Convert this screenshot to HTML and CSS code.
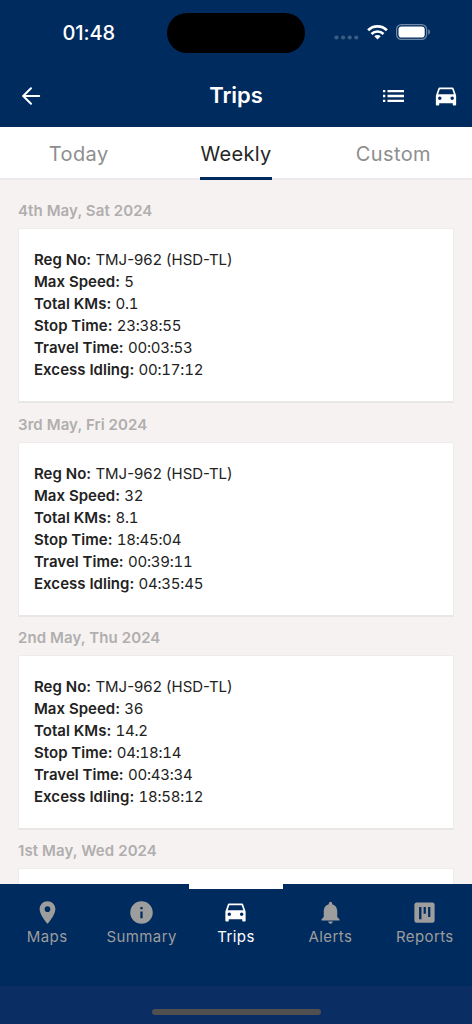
FILE: index.html
```html
<!DOCTYPE html>
<html lang="en">
<head>
<meta charset="utf-8">
<title>Trips</title>
<link rel="stylesheet" href="styles.css">
</head>
<body>
<svg class="defs" aria-hidden="true"><symbol id="car" viewBox="0 0 24 24"><path d="M18.92 5.01C18.72 4.42 18.16 4 17.5 4h-11c-.66 0-1.21.42-1.42 1.01L3 11v8c0 .55.45 1 1 1h1c.55 0 1-.45 1-1v-1h12v1c0 .55.45 1 1 1h1c.55 0 1-.45 1-1v-8l-2.08-5.99zM6.5 15c-.83 0-1.5-.67-1.5-1.5S5.67 12 6.5 12s1.5.67 1.5 1.5S7.33 15 6.5 15zm11 0c-.83 0-1.5-.67-1.5-1.5s.67-1.5 1.5-1.5 1.5.67 1.5 1.5-.67 1.5-1.5 1.5zM5 10l1.500-4.500h11L19 10H5z"/></symbol></svg>
<div class="app">
  <header class="header">
    <div class="status">
      <span class="clock">01:48</span>
      <span class="island"></span>
      <span class="signals">
        <svg class="dots" viewBox="0 0 25 5"><circle cx="2.500" cy="2.500" r="2.100"/><circle cx="9.100" cy="2.500" r="2.100"/><circle cx="15.700" cy="2.500" r="2.100"/><circle cx="22.300" cy="2.500" r="2.100"/></svg>
        <svg class="wifi" viewBox="0 0 21 16"><path d="M10.500 15.500 7.300 12.300a4.600 4.600 0 0 1 6.400 0z"/><g fill="none" stroke="currentColor" stroke-width="2.700"><path d="M1.100 6.200a13.400 13.400 0 0 1 18.800 0M4.500 9.900a8.700 8.700 0 0 1 12 0"/></g></svg>
        <svg class="battery" viewBox="0 0 35 16"><rect x=".6" y=".6" width="30" height="14.800" rx="4.800" fill="none" stroke="#7088a8" stroke-width="1.200"/><rect x="2.500" y="2.500" width="26.200" height="11" rx="3.100"/><path d="M32.200 5.300c2.400.9 2.400 4.500 0 5.400z" fill="#7088a8"/></svg>
      </span>
    </div>
    <div class="toolbar">
      <svg class="back" viewBox="0 0 20 20"><path d="M18.200 10H2M10 2.200 2.200 10l7.800 7.800"/></svg>
      <h1 class="title">Trips</h1>
      <div class="actions">
        <svg class="list" viewBox="0 0 21 12"><path d="M0 0h2.300v2.300H0zM4.500 0H21v2.300H4.500zM0 4.850h2.300v2.300H0zM4.500 4.850H21v2.300H4.500zM0 9.700h2.300V12H0zM4.500 9.700H21V12H4.500z"/></svg>
        <svg class="car-action"><use href="#car"/></svg>
      </div>
    </div>
  </header>
  <nav class="tabs">
    <div class="tab"><span>Today</span></div>
    <div class="tab active"><span>Weekly</span></div>
    <div class="tab"><span>Custom</span></div>
  </nav>
  <main class="days">
    <section class="day">
      <h2 class="date">4th May, Sat 2024</h2>
      <div class="card">
        <p class="row"><b>Reg No:</b> <span class="reg">TMJ-962 (HSD-TL)</span></p>
        <p class="row"><b>Max Speed:</b> <span>5</span></p>
        <p class="row"><b>Total KMs:</b> <span>0.1</span></p>
        <p class="row"><b>Stop Time:</b> <span>23:38:55</span></p>
        <p class="row"><b>Travel Time:</b> <span>00:03:53</span></p>
        <p class="row"><b>Excess Idling:</b> <span>00:17:12</span></p>
      </div>
    </section>
    <section class="day">
      <h2 class="date">3rd May, Fri 2024</h2>
      <div class="card">
        <p class="row"><b>Reg No:</b> <span class="reg">TMJ-962 (HSD-TL)</span></p>
        <p class="row"><b>Max Speed:</b> <span>32</span></p>
        <p class="row"><b>Total KMs:</b> <span>8.1</span></p>
        <p class="row"><b>Stop Time:</b> <span>18:45:04</span></p>
        <p class="row"><b>Travel Time:</b> <span>00:39:11</span></p>
        <p class="row"><b>Excess Idling:</b> <span>04:35:45</span></p>
      </div>
    </section>
    <section class="day">
      <h2 class="date">2nd May, Thu 2024</h2>
      <div class="card">
        <p class="row"><b>Reg No:</b> <span class="reg">TMJ-962 (HSD-TL)</span></p>
        <p class="row"><b>Max Speed:</b> <span>36</span></p>
        <p class="row"><b>Total KMs:</b> <span>14.2</span></p>
        <p class="row"><b>Stop Time:</b> <span>04:18:14</span></p>
        <p class="row"><b>Travel Time:</b> <span>00:43:34</span></p>
        <p class="row"><b>Excess Idling:</b> <span>18:58:12</span></p>
      </div>
    </section>
    <section class="day">
      <h2 class="date">1st May, Wed 2024</h2>
      <div class="card"></div>
    </section>
  </main>
  <footer class="footer">
    <nav class="bottom">
      <div class="item"><svg viewBox="0 0 24 24"><path d="M12 2C8.130 2 5 5.130 5 9c0 5.250 7 13 7 13s7-7.750 7-13c0-3.870-3.130-7-7-7zm0 9.500a2.500 2.500 0 1 1 0-5 2.500 2.500 0 0 1 0 5z"/></svg><span>Maps</span></div>
      <div class="item"><svg viewBox="0 0 24 24"><path d="M12 2a10 10 0 1 0 0 20 10 10 0 0 0 0-20zm1 15h-2v-6h2zm0-8h-2V7h2z"/></svg><span>Summary</span></div>
      <div class="item current"><svg><use href="#car"/></svg><span>Trips</span></div>
      <div class="item"><svg viewBox="0 0 24 24"><path d="M12 22c1.100 0 2-.900 2-2h-4c0 1.100.890 2 2 2zm6-6v-5c0-3.070-1.640-5.640-4.500-6.320V4a1.500 1.500 0 0 0-3 0v.68C7.630 5.360 6 7.920 6 11v5l-2 2v1h16v-1z"/></svg><span>Alerts</span></div>
      <div class="item"><svg viewBox="0 0 24 24"><path fill-rule="evenodd" d="M5 3h14a2 2 0 0 1 2 2v14a2 2 0 0 1-2 2H5a2 2 0 0 1-2-2V5c0-1.100.9-2 2-2zM7.200 7v11h2.100V7zm4 0v6h2V7zm4 0v9h2V7z"/></svg><span>Reports</span></div>
    </nav>
    <div class="home"><span></span></div>
  </footer>
</div>
</body>
</html>
```
FILE: styles.css
```css
* { box-sizing: border-box; }
body { margin: 0; font-family: Inter, "Liberation Sans", sans-serif; }
h1, h2, p { margin: 0; }
svg { display: block; fill: currentColor; }
.defs { position: absolute; width: 0; height: 0; }
.app { width: 472px; height: 1024px; display: flex; flex-direction: column; overflow: hidden; background: #f6f2f1; }
.header { flex: none; height: 126.5px; background: #002b5e; color: #fff; }
.status { height: 65px; display: grid; grid-template-columns: 167px 138px 167px; align-items: center; }
.clock { padding-left: 62.5px; font-size: 20px; font-weight: 550; letter-spacing: -0.1px; }
.island { height: 40px; border-radius: 20px; background: #000; }
.signals { display: flex; align-items: center; padding-left: 29px; }
.dots { width: 25px; height: 5px; margin-top: 10px; color: #3d5c84; }
.wifi { width: 21px; height: 16px; margin: -2px 0 0 8px; }
.battery { width: 35px; height: 16px; margin: -1px 0 0 8px; }
.toolbar { height: 61px; display: grid; grid-template-columns: 120px 1fr 120px; align-items: center; }
.back { width: 20px; height: 20px; margin-left: 21px; fill: none; stroke: currentColor; stroke-width: 2; stroke-linecap: round; stroke-linejoin: round; }
.title { text-align: center; font-size: 22px; line-height: 30px; padding-bottom: 1px; font-weight: 600; letter-spacing: -0.1px; }
.actions { display: flex; align-items: center; justify-content: flex-end; gap: 28px; padding-right: 12.5px; }
.list { width: 21px; height: 12px; }
.car-action { width: 28px; height: 27px; margin-top: 1px; }
.tabs { flex: none; height: 53.5px; display: grid; grid-template-columns: repeat(3, 1fr); background: #fff; border-bottom: 2px solid #ece8ec; color: #8e8e8e; font-size: 20px; letter-spacing: .4px; }
.tab { display: flex; justify-content: center; height: 53.5px; }
.tab span { line-height: 54px; height: 53.5px; }
.active span { width: 72px; text-align: center; white-space: nowrap; color: #252525; border-bottom: 3px solid #002b5e; letter-spacing: .3px; }
.days { flex: 1; min-height: 0; overflow: hidden; padding: 20.4px 18px 0; }
.day { height: 213.3px; }
.date { height: 28px; line-height: 22px; font-size: 15px; font-weight: 600; color: #b0aeae; letter-spacing: .1px; }
.card { height: 175px; padding: 20px 15px; background: #fff; border: 1px solid #eeebeb; border-bottom: 2px solid #e9e6e6; border-radius: 1px; color: #222; }
.row { height: 22px; line-height: 22px; font-size: 15px; white-space: nowrap; }
.row b { font-weight: 600; letter-spacing: .03px; }
.row span { font-variant-numeric: tabular-nums; letter-spacing: -0.22px; }
.row .reg { font-variant-numeric: normal; letter-spacing: 0; }
.footer { flex: none; height: 140px; background: #002b5e; color: #9d9d9d; }
.bottom { height: 102px; display: grid; grid-template-columns: repeat(5, 1fr); }
.item { display: flex; flex-direction: column; align-items: center; padding-top: 15px; }
.item svg { width: 27px; height: 27px; }
.item span { font-size: 15px; line-height: 22px; letter-spacing: .4px; }
.item.current { color: #fff; border-top: 5px solid #fff; padding-top: 10px; }
.home { height: 38px; background: #0a2d64; display: flex; justify-content: center; padding-top: 23px; }
.home span { width: 169px; height: 6px; border-radius: 3px; background: #505050; }
```
